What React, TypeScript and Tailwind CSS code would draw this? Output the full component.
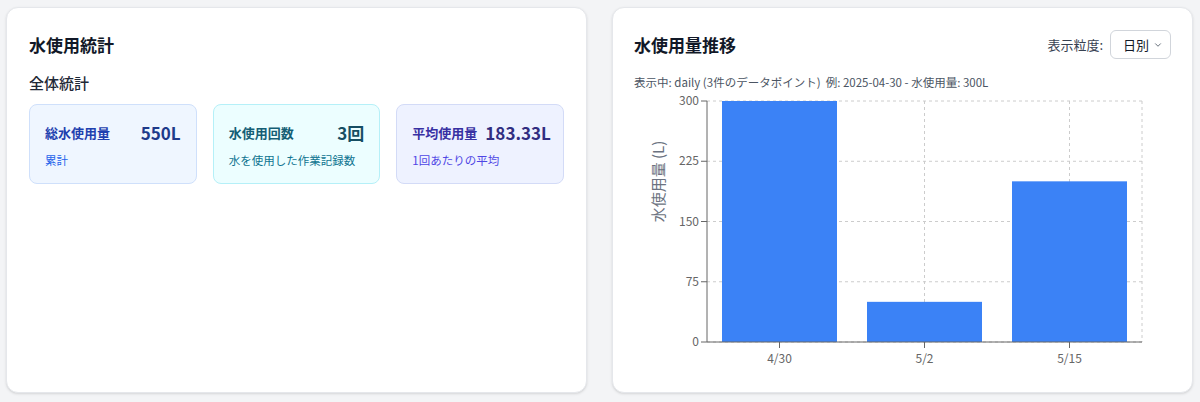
import { ChevronDown } from "lucide-react";

const font = { fontFamily: '"Noto Sans CJK JP", "Noto Sans", sans-serif' };

interface StatProps {
  label: string;
  value: string;
  note: string;
  tone: "blue" | "cyan" | "indigo";
}

function StatBox({ label, value, note, tone }: StatProps) {
  const styles = {
    blue: {
      box: "bg-[#eff6ff] border-[#cfe0fb]",
      label: "text-[#1e40af]",
      value: "text-[#1e3a8a]",
      note: "text-[#2563eb]",
    },
    cyan: {
      box: "bg-[#ecfeff] border-[#b5f0f8]",
      label: "text-[#155e75]",
      value: "text-[#164e63]",
      note: "text-[#0e7490]",
    },
    indigo: {
      box: "bg-[#eef2ff] border-[#d3dbf7]",
      label: "text-[#3730a3]",
      value: "text-[#312e81]",
      note: "text-[#4f46e5]",
    },
  }[tone];

  return (
    <div className={`rounded-lg border px-[15px] pt-[15px] pb-[15px] ${styles.box}`}>
      <div className="flex items-center justify-between gap-2">
        <span className={`whitespace-nowrap text-[13px] font-semibold ${styles.label}`}>{label}</span>
        <span className={`whitespace-nowrap text-[17px] leading-[26px] font-bold ${styles.value}`}>{value}</span>
      </div>
      <p className={`mt-[6px] text-[11.5px] leading-4 ${styles.note}`}>{note}</p>
    </div>
  );
}

const data = [
  { label: "4/30", value: 300 },
  { label: "5/2", value: 50 },
  { label: "5/15", value: 200 },
];

function UsageChart() {
  const left = 73;
  const right = 508;
  const top = 11;
  const bottom = 252;
  const band = (right - left) / data.length;
  const scale = (v: number) => bottom - (v / 300) * (bottom - top);
  const ticks = [0, 75, 150, 225, 300];

  return (
    <svg width="536" height="284" className="block">
      {/* grid */}
      {ticks.map((t) => (
        <line key={t} x1={left} x2={right} y1={scale(t)} y2={scale(t)} stroke="#ccc" strokeDasharray="3 3" />
      ))}
      {data.map((d, i) => (
        <line
          key={d.label}
          x1={left + band * (i + 0.5)}
          x2={left + band * (i + 0.5)}
          y1={top}
          y2={bottom}
          stroke="#ccc"
          strokeDasharray="3 3"
        />
      ))}
      <line x1={right} x2={right} y1={top} y2={bottom} stroke="#ccc" strokeDasharray="3 3" />

      {/* bars */}
      {data.map((d, i) => (
        <rect
          key={d.label}
          x={left + band * i + 15}
          y={scale(d.value)}
          width={band - 30}
          height={bottom - scale(d.value)}
          fill="#3b82f6"
        />
      ))}

      {/* y axis */}
      <line x1={left} x2={left} y1={top} y2={bottom} stroke="#666" />
      {ticks.map((t) => (
        <g key={t}>
          <line x1={left - 6} x2={left} y1={scale(t)} y2={scale(t)} stroke="#666" />
          <text x={left - 8} y={scale(t) + 4} textAnchor="end" fontSize="12" fill="#666" style={font}>
            {t}
          </text>
        </g>
      ))}
      <text
        transform={`translate(30 ${(top + bottom) / 2 - 40}) rotate(-90)`}
        textAnchor="middle"
        fontSize="15"
        fill="#6b7280"
        style={font}
      >
        水使用量 (L)
      </text>

      {/* x axis */}
      <line x1={left} x2={right} y1={bottom} y2={bottom} stroke="#666" />
      {data.map((d, i) => (
        <g key={d.label}>
          <line
            x1={left + band * (i + 0.5)}
            x2={left + band * (i + 0.5)}
            y1={bottom}
            y2={bottom + 6}
            stroke="#666"
          />
          <text x={left + band * (i + 0.5)} y={bottom + 21} textAnchor="middle" fontSize="12" fill="#666" style={font}>
            {d.label}
          </text>
        </g>
      ))}
    </svg>
  );
}

export default function App() {
  return (
    <div className="h-[402px] bg-[#f3f4f6] pl-[6px] pr-[7px] pt-[7px] pb-[9px]" style={font}>
      <div className="grid h-full grid-cols-2 gap-[25px]">
        {/* 水使用統計 */}
        <section className="rounded-xl border border-[#e5e7eb] bg-white px-[22px] pt-[23px] shadow-sm">
          <h2 className="text-[17px] leading-[28px] font-bold text-[#111827]">水使用統計</h2>
          <h3 className="mt-[12px] text-[15px] leading-6 font-medium text-[#1f2937]">全体統計</h3>
          <div className="mt-[9px] grid grid-cols-3 gap-4">
            <StatBox tone="blue" label="総水使用量" value="550L" note="累計" />
            <StatBox tone="cyan" label="水使用回数" value="3回" note="水を使用した作業記録数" />
            <StatBox tone="indigo" label="平均使用量" value="183.33L" note="1回あたりの平均" />
          </div>
        </section>

        {/* 水使用量推移 */}
        <section className="rounded-xl border border-[#e5e7eb] bg-white px-[21px] pt-[22px] shadow-sm">
          <div className="flex items-center justify-between">
            <h2 className="text-[17px] leading-[28px] font-bold text-[#111827]">水使用量推移</h2>
            <div className="flex items-center gap-[7px]">
              <span className="text-[13px] text-[#374151]">表示粒度:</span>
              <div className="flex h-[29px] w-[61px] items-center justify-between rounded-md border border-[#d1d5db] bg-white pl-3 pr-[7px]">
                <span className="text-[13px] text-[#111827]">日別</span>
                <ChevronDown className="h-[10px] w-[10px] text-[#4b5563]" strokeWidth={2} />
              </div>
            </div>
          </div>
          <p className="mt-[15px] text-[11.5px] leading-4 text-[#4b5563]">
            表示中: daily (3件のデータポイント)&nbsp;&nbsp;例: 2025-04-30 - 水使用量: 300L
          </p>
          <UsageChart />
        </section>
      </div>
    </div>
  );
}
